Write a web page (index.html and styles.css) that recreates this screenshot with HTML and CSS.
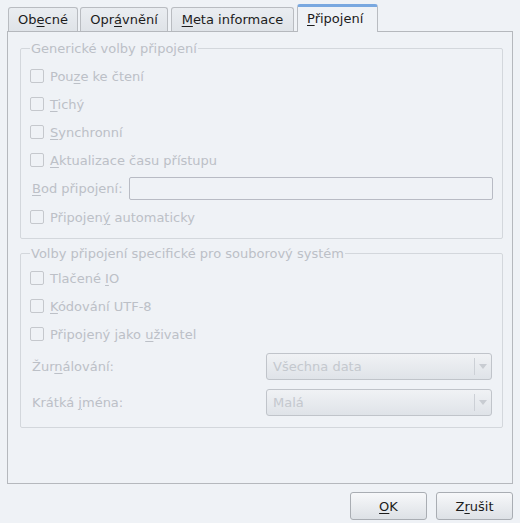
FILE: index.html
```html
<!DOCTYPE html>
<html lang="cs">
<head>
<meta charset="UTF-8" />
<title>Vlastnosti - Připojení</title>
<link rel="stylesheet" href="styles.css">
</head>
<body>
  <div class="dialog">
    <div class="tabs">
      <div class="tab tab-general">Ob<u>e</u>cné</div>
      <div class="tab tab-perms">Opr<u>á</u>vnění</div>
      <div class="tab tab-meta"><u>M</u>eta informace</div>
      <div class="tab tab-mount active"><u>P</u>řipojení</div>
    </div>

    <div class="panel">
      <fieldset class="group group-generic">
        <legend>Generické volby připojení</legend>
        <label class="check"><span class="box"></span><span>Pou<u>z</u>e ke čtení</span></label>
        <label class="check"><span class="box"></span><span><u>T</u>ichý</span></label>
        <label class="check"><span class="box"></span><span><u>S</u>ynchronní</span></label>
        <label class="check"><span class="box"></span><span><u>A</u>ktualizace času přístupu</span></label>
        <div class="field-row">
          <span class="field-label"><u>B</u>od připojení:</span>
          <span class="line-edit"></span>
        </div>
        <label class="check"><span class="box"></span><span>Připojen<u>ý</u> automaticky</span></label>
      </fieldset>

      <fieldset class="group group-fs">
        <legend>Volby připojení specifické pro souborový systém</legend>
        <label class="check"><span class="box"></span><span>Tlačené <u>I</u>O</span></label>
        <label class="check"><span class="box"></span><span><u>K</u>ódování UTF-8</span></label>
        <label class="check"><span class="box"></span><span>Připojený jako <u>u</u>živatel</span></label>
        <div class="combo-row">
          <span class="field-label">Žur<u>n</u>álování:</span>
          <span class="combo"><span class="combo-text">Všechna data</span><span class="combo-arrow"></span></span>
        </div>
        <div class="combo-row">
          <span class="field-label">Krátká <u>j</u>ména:</span>
          <span class="combo"><span class="combo-text">Malá</span><span class="combo-arrow"></span></span>
        </div>
      </fieldset>
    </div>

    <div class="buttons">
      <button class="btn"><u>O</u>K</button>
      <button class="btn">Z<u>r</u>ušit</button>
    </div>
  </div>
</body>
</html>
```

FILE: styles.css
```css
body {
  margin: 0;
  background: #eff2f6;
  font-family: "DejaVu Sans", sans-serif;
  font-size: 13px;
  color: #222;
}
u {
  text-decoration-thickness: 1px;
  text-underline-offset: 2px;
}
.dialog {
  width: 520px;
  height: 523px;
  padding: 3px 7px 0 7px;
  box-sizing: border-box;
}

/* tabs */
.tabs {
  display: flex;
  align-items: flex-end;
  padding-left: 1px;
  height: 28px;
}
.tab {
  height: 24px;
  line-height: 23px;
  text-align: center;
  border: 1px solid #b9bcc1;
  border-bottom: none;
  border-radius: 3px 3px 0 0;
  background: linear-gradient(#eaedf1, #dfe3e8);
  color: #1c1c1c;
  box-sizing: border-box;
  white-space: nowrap;
}
.tab-general { width: 70px; }
.tab-perms { width: 88px; margin-left: 2px; }
.tab-meta { width: 123px; margin-left: 3px; }
.tab.active {
  width: 81px;
  margin-left: 3px;
  height: 28px;
  line-height: 24px;
  text-align: left;
  padding-left: 9px;
  background: #eff2f6;
  border-top: 3px solid #79a8e0;
  margin-bottom: -1px;
}

/* panel */
.panel {
  height: 453px;
  border: 1px solid #b5b8bd;
  box-sizing: border-box;
  padding: 9px 9px 0 12px;
}

.group {
  margin: 0;
  padding: 6px 0 0 9px;
  border: 1px solid #d3d7dc;
  border-radius: 2px;
  color: #bcc0c7;
}
.group legend {
  padding: 0 1px;
  color: #bcc0c7;
}
.group-generic {
  height: 198px;
  box-sizing: border-box;
}
.group-fs {
  margin-top: 7px;
  padding-top: 3px;
  height: 182px;
  box-sizing: border-box;
}

.check {
  display: flex;
  align-items: center;
  gap: 6px;
  height: 28px;
}
.box {
  width: 12px;
  height: 12px;
  border: 1px solid #c5c8cd;
  border-radius: 2px;
  background: #eff2f6;
  flex: none;
}

.field-row {
  display: flex;
  align-items: center;
  height: 29px;
  gap: 6px;
}
.field-row .field-label {
  padding-left: 2px;
}
.line-edit {
  flex: 1;
  height: 23px;
  margin-right: 9px;
  border: 1px solid #b8bbc4;
  border-radius: 2px;
  background: #eff2f6;
  box-sizing: border-box;
}

.combo-row {
  display: flex;
  align-items: center;
  justify-content: space-between;
  height: 36px;
  padding-left: 2px;
  padding-right: 10px;
}
.combo {
  display: flex;
  align-items: center;
  width: 226px;
  height: 27px;
  border: 1px solid #c0c4ca;
  border-radius: 3px;
  box-sizing: border-box;
  background: linear-gradient(#f0f2f5, #dfe3e8);
}
.combo-text {
  flex: 1;
  padding-left: 6px;
  color: #c4c8ce;
}
.combo-arrow {
  width: 16px;
  height: 17px;
  border-left: 1px solid #ccd0d6;
  position: relative;
}
.combo-arrow::after {
  content: "";
  position: absolute;
  left: 4px;
  top: 6px;
  border-left: 4px solid transparent;
  border-right: 4px solid transparent;
  border-top: 5px solid #c8ccd2;
}

/* buttons */
.buttons {
  display: flex;
  justify-content: flex-end;
  gap: 9px;
  padding-top: 8px;
}
.btn {
  width: 77px;
  height: 28px;
  font-family: "DejaVu Sans", sans-serif;
  font-size: 13px;
  color: #1c1c1c;
  border: 1px solid #a9adb3;
  border-radius: 3px;
  background: linear-gradient(#f7f8fa, #dde1e6);
}
```
